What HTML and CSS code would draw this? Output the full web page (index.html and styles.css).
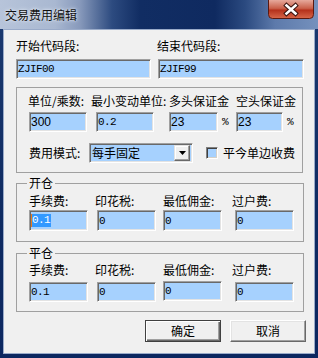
FILE: index.html
```html
<!DOCTYPE html>
<html lang="zh-CN">
<head>
  <meta charset="UTF-8">
  <title>交易费用编辑</title>
  <link rel="stylesheet" href="styles.css">
</head>
<body>
  <div class="window">
    <!-- 标题栏 -->
    <div class="titlebar">
      <span class="titlebar-title">交易费用编辑</span>
      <button class="close-btn">
        <svg width="46" height="19" viewBox="0 0 46 19">
          <defs>
            <linearGradient id="closeGrad" x1="0" y1="0" x2="0" y2="1">
              <stop offset="0" stop-color="#e6a99c"/>
              <stop offset="0.45" stop-color="#c9604a"/>
              <stop offset="0.55" stop-color="#b5311c"/>
              <stop offset="1" stop-color="#d8684a"/>
            </linearGradient>
          </defs>
          <path d="M0.5,0 V14.5 Q0.5,18.5 4.5,18.5 H41.5 Q45.5,18.5 45.5,14.5 V0" fill="url(#closeGrad)" stroke="#5a1a12"/>
          <path d="M18.5,5.5 L27.5,13.5 M27.5,5.5 L18.5,13.5" stroke="#3a1410" stroke-width="4.6" stroke-linecap="square"/>
          <path d="M18.5,5.5 L27.5,13.5 M27.5,5.5 L18.5,13.5" stroke="#ffffff" stroke-width="2.6" stroke-linecap="square"/>
        </svg>
      </button>
    </div>

    <div class="client">
      <!-- 代码段 -->
      <div class="code-row">
        <div class="code-field">
          <div class="label">开始代码段:</div>
          <div class="edit mono code-start">ZJIF00</div>
        </div>
        <div class="code-field">
          <div class="label">结束代码段:</div>
          <div class="edit mono code-end">ZJIF99</div>
        </div>
      </div>

      <!-- 合约参数 -->
      <div class="groupbox contract">
        <div class="contract-row">
          <div class="c1 label">单位/乘数:</div>
          <div class="c2 label">最小变动单位:</div>
          <div class="c3 label">多头保证金</div>
          <div class="c4 label">空头保证金</div>
        </div>
        <div class="contract-row inputs">
          <div class="c1"><div class="edit sans unit">300</div></div>
          <div class="c2"><div class="edit mono tick">0.2</div></div>
          <div class="c3"><div class="edit sans margin">23</div><span class="pct mono">%</span></div>
          <div class="c4"><div class="edit sans margin short">23</div><span class="pct mono">%</span></div>
        </div>
        <div class="mode-row">
          <div class="label mode-label">费用模式:</div>
          <div class="combo">
            <span class="combo-text">每手固定</span>
            <span class="combo-btn">
              <svg width="7" height="4" viewBox="0 0 7 4"><path d="M0,0 H7 L3.5,4 Z" fill="#000"/></svg>
            </span>
          </div>
          <span class="checkbox"></span>
          <span class="label check-label">平今单边收费</span>
        </div>
      </div>

      <!-- 开仓 -->
      <fieldset class="fee-group open">
        <legend>开仓</legend>
        <div class="fee-row">
          <div class="f1 label">手续费:</div>
          <div class="f2 label">印花税:</div>
          <div class="f3 label">最低佣金:</div>
          <div class="f4 label">过户费:</div>
        </div>
        <div class="fee-row inputs">
          <div class="f1"><div class="edit mono fee"><span class="caret"></span><span class="selected">0.1</span></div></div>
          <div class="f2"><div class="edit mono fee">0</div></div>
          <div class="f3"><div class="edit mono fee">0</div></div>
          <div class="f4"><div class="edit mono fee">0</div></div>
        </div>
      </fieldset>

      <!-- 平仓 -->
      <fieldset class="fee-group close">
        <legend>平仓</legend>
        <div class="fee-row">
          <div class="f1 label">手续费:</div>
          <div class="f2 label">印花税:</div>
          <div class="f3 label">最低佣金:</div>
          <div class="f4 label">过户费:</div>
        </div>
        <div class="fee-row inputs">
          <div class="f1"><div class="edit mono fee">0.1</div></div>
          <div class="f2"><div class="edit mono fee">0</div></div>
          <div class="f3"><div class="edit mono fee raised">0</div></div>
          <div class="f4"><div class="edit mono fee">0</div></div>
        </div>
      </fieldset>

      <!-- 按钮 -->
      <div class="buttons">
        <button class="btn default">确定</button>
        <button class="btn">取消</button>
      </div>
    </div>
  </div>
</body>
</html>
```

FILE: styles.css
```css
* {
  margin: 0;
  padding: 0;
  box-sizing: border-box;
}

body {
  width: 318px;
  height: 358px;
  overflow: hidden;
  font-family: "Noto Sans CJK SC", "Liberation Sans", sans-serif;
  font-size: 12px;
  color: #000;
}

/* 窗口外框 */
.window {
  width: 318px;
  height: 358px;
  display: flex;
  flex-direction: column;
  background: linear-gradient(to bottom, #1c3a70 0, #0f2b62 60%, #0c2760 100%);
  padding: 0 3px 4px 3px;
}

.titlebar {
  height: 29px;
  margin: 0 -3px;
  display: flex;
  align-items: flex-start;
  justify-content: space-between;
  background:
    linear-gradient(to right, #b7c4da 0, #a9b8d1 55px, #8799bb 80px, #2d4b80 112px, #112d63 140px, #0f2a60 215px, #2b4a80 245px, #5d7aab 275px, #7591bd 318px);
}

.titlebar-title {
  margin: 8px 0 0 5px;
  line-height: 14px;
  color: #111;
  text-shadow: 0 0 4px #e4ebf5, 0 0 2px #e4ebf5;
}

.close-btn {
  width: 46px;
  height: 19px;
  margin-right: 4px;
  border: none;
  background: transparent;
  display: block;
}

.close-btn svg {
  display: block;
}

/* 客户区 */
.client {
  flex: 1;
  background-color: #f0f0f0;
  border: 1px solid #9aabc9;
  padding: 9px 0 0 12px;
  display: flex;
  flex-direction: column;
}

.label {
  line-height: 14px;
  white-space: nowrap;
}

.mono {
  font-family: "Liberation Mono", monospace;
  font-size: 11px;
  letter-spacing: -0.6px;
}

.sans {
  font-family: "Liberation Sans", sans-serif;
  font-size: 12px;
}

/* 凹陷编辑框 */
.edit {
  height: 20px;
  background-color: #a6d1fe;
  border: 1px solid;
  border-color: #a0a0a0 #ffffff #ffffff #a0a0a0;
  box-shadow: inset 1px 1px 0 #696969, inset -1px -1px 0 #e3e3e3;
  padding-left: 1px;
  display: flex;
  align-items: center;
  white-space: nowrap;
}

.code-row {
  display: flex;
}

.code-field {
  display: flex;
  flex-direction: column;
}

.code-field:first-child {
  width: 141px;
}

.code-field .edit {
  margin-top: 6px;
}

.code-start {
  width: 135px;
}

.code-end {
  width: 146px;
  margin-left: 1px;
}

/* 合约参数分组 */
.groupbox {
  border: 1px solid #a0a0a0;
}

.contract {
  width: 287px;
  margin-top: 8px;
  padding: 6px 0 9px 11px;
}

.contract-row {
  display: flex;
}

.contract-row.inputs {
  margin-top: 4px;
  align-items: center;
}

.c1 { width: 63px; }
.c2 { width: 78px; }
.c3 { width: 67px; display: flex; align-items: center; }
.c4 { flex: 1; display: flex; align-items: center; }

.unit {
  width: 58px;
  margin-left: 1px;
}

.tick {
  width: 58px;
  margin-left: 5px;
}

.margin {
  width: 49px;
}

.margin.short {
  width: 47px;
}

.pct {
  margin-left: 4px;
}

.mode-row {
  margin-top: 11px;
  display: flex;
  align-items: center;
}

.mode-label {
  width: 60px;
  margin-left: 1px;
}

.combo {
  width: 104px;
  height: 20px;
  display: flex;
  align-items: center;
  justify-content: space-between;
  background-color: #a6d1fe;
  border: 1px solid;
  border-color: #a0a0a0 #ffffff #ffffff #a0a0a0;
  box-shadow: inset 1px 1px 0 #696969, inset -1px -1px 0 #e3e3e3;
  padding: 0 2px 0 2px;
}

.combo-text {
  line-height: 14px;
}

.combo-btn {
  width: 16px;
  height: 16px;
  display: flex;
  align-items: center;
  justify-content: center;
  background-color: #f0f0f0;
  border: 1px solid;
  border-color: #e3e3e3 #696969 #696969 #e3e3e3;
  box-shadow: inset -1px -1px 0 #a0a0a0, inset 1px 1px 0 #fff;
}

.combo-btn svg {
  display: block;
}

.checkbox {
  width: 12px;
  height: 12px;
  margin-left: 13px;
  background-color: #a6d1fe;
  border: 1px solid;
  border-color: #808080 #ffffff #ffffff #808080;
  box-shadow: inset 1px 1px 0 #404040, inset -1px -1px 0 #d4d0c8;
}

.check-label {
  margin-left: 5px;
}

/* 开仓 / 平仓 */
.fee-group {
  width: 288px;
  border: 1px solid #a0a0a0;
  padding: 4px 0 10px 12px;
  min-width: 0;
}

.fee-group legend {
  line-height: 14px;
  padding: 0 2px;
  margin-left: -2px;
}

.fee-group.open {
  margin-top: 3px;
}

.fee-group.close {
  margin-top: 4px;
  padding-top: 3px;
  padding-bottom: 9px;
}

.fee-row {
  display: flex;
}

.fee-row.inputs {
  margin-top: 2px;
  align-items: flex-start;
}

.fee-group.close .fee-row.inputs {
  margin-top: 5px;
}

.f1 { width: 66px; }
.f2 { width: 68px; }
.f3 { width: 69px; }
.f4 { flex: 1; }

.fee {
  width: 59px;
  height: 21px;
}

.fee-group.close .fee {
  height: 20px;
}

.f2 .fee { margin-left: 2px; }
.f4 .fee { margin-left: 3px; }

.fee.raised {
  margin-top: -1px;
}

.selected {
  background-color: #3399ff;
  color: #fff;
  line-height: 13px;
  padding-right: 1px;
}

.caret {
  width: 1px;
  height: 13px;
  background-color: #f07a1a;
}

/* 底部按钮 */
.buttons {
  display: flex;
  gap: 9px;
  margin-top: 8px;
  padding-left: 129px;
}

.btn {
  width: 76px;
  height: 22px;
  font-family: "Noto Sans CJK SC", sans-serif;
  font-size: 12px;
  line-height: 14px;
  color: #000;
  background-color: #f0f0f0;
  border: 1px solid;
  border-color: #ffffff #696969 #696969 #ffffff;
  box-shadow: inset -1px -1px 0 #a0a0a0, inset 1px 1px 0 #e3e3e3;
}

.btn.default {
  border: 1px solid #404040;
  box-shadow: inset 1px 1px 0 #fff, inset -1px -1px 0 #696969, inset -2px -2px 0 #a0a0a0;
}
```
